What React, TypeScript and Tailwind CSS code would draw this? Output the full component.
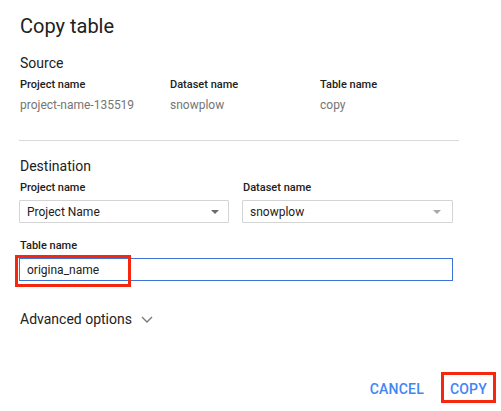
import React from "react";

function Caret({ light }: { light?: boolean }) {
  return (
    <svg width="8" height="4" viewBox="0 0 8 4" className="shrink-0">
      <path d="M0 0 L8 0 L4 4 Z" fill={light ? "#a8a8a8" : "#6b6b6b"} />
    </svg>
  );
}

export default function App() {
  return (
    <div
      className="w-[501px] h-[411px] bg-white text-[#212121] pl-[19px] flex flex-col"
      style={{ fontFamily: "Roboto, 'Liberation Sans', sans-serif" }}
    >
      {/* Title */}
      <h1 className="mt-[14px] text-[20px] leading-[24px] pl-[1px]">Copy table</h1>

      {/* Source */}
      <h2 className="mt-[15px] text-[14px] leading-[20px] pl-[1px]">Source</h2>
      <div className="mt-[4px] grid grid-cols-[150px_150px_150px] pl-[1px]">
        {[
          ["Project name", "project-name-135519"],
          ["Dataset name", "snowplow"],
          ["Table name", "copy"],
        ].map(([label, value]) => (
          <div key={label} className="flex flex-col">
            <div className="text-[11px] leading-[16px] font-medium">{label}</div>
            <div className="mt-[4px] text-[12px] leading-[16px] text-[#757575]">{value}</div>
          </div>
        ))}
      </div>

      <div className="mt-[27px] h-px w-[440px] bg-[#d9d9d9]" />

      {/* Destination */}
      <h2 className="mt-[15px] text-[14px] leading-[20px] pl-[1px]">Destination</h2>
      <div className="mt-[4px] flex gap-[13px] w-[434px]">
        <div className="flex flex-col w-[210px]">
          <div className="text-[11px] leading-[16px] font-medium pl-[1px]">Project name</div>
          <div className="mt-[4px] h-[23px] border border-[#d4d4d4] rounded-[1px] flex items-center justify-between pl-[7px] pr-[9px]">
            <span className="text-[12px] leading-[16px]">Project Name</span>
            <Caret />
          </div>
        </div>
        <div className="flex flex-col w-[211px]">
          <div className="text-[11px] leading-[16px] font-medium pl-[1px]">Dataset name</div>
          <div className="mt-[4px] h-[23px] border border-[#d4d4d4] rounded-[1px] flex items-center justify-between pl-[7px] pr-[11px]">
            <span className="text-[12px] leading-[16px]">snowplow</span>
            <Caret light />
          </div>
        </div>
      </div>

      <div className="mt-[15px] text-[11px] leading-[16px] font-medium pl-[1px]">Table name</div>
      <div className="relative mt-[4px] w-[434px] h-[23px] border border-[#3e73d6] flex items-center pl-[7px]">
        <span className="text-[12px] leading-[16px]">origina_name</span>
        <div className="absolute left-[-5px] top-[-4px] w-[116px] h-[32px] border-[3px] border-[#f5270f]" />
      </div>

      {/* Advanced */}
      <div className="mt-[28px] flex items-center gap-[9px] pl-[1px]">
        <span className="text-[14px] leading-[20px]">Advanced options</span>
        <svg width="12" height="7" viewBox="0 0 12 7" className="mt-[1px]">
          <path d="M1 1 L6 6 L11 1" fill="none" stroke="#7a7a7a" strokeWidth="1.4" />
        </svg>
      </div>

      {/* Actions */}
      <div className="mt-[43px] flex justify-end items-start pr-[5px]">
        <button className="pt-[7px] text-[14px] leading-[20px] font-medium text-[#4285f4] tracking-[0.2px]">
          CANCEL
        </button>
        <button className="ml-[17px] border-[3px] border-[#f5270f] px-[6px] pt-[4px] pb-[1px] text-[14px] leading-[20px] font-medium text-[#4285f4] tracking-[0.2px]">
          COPY
        </button>
      </div>
    </div>
  );
}
